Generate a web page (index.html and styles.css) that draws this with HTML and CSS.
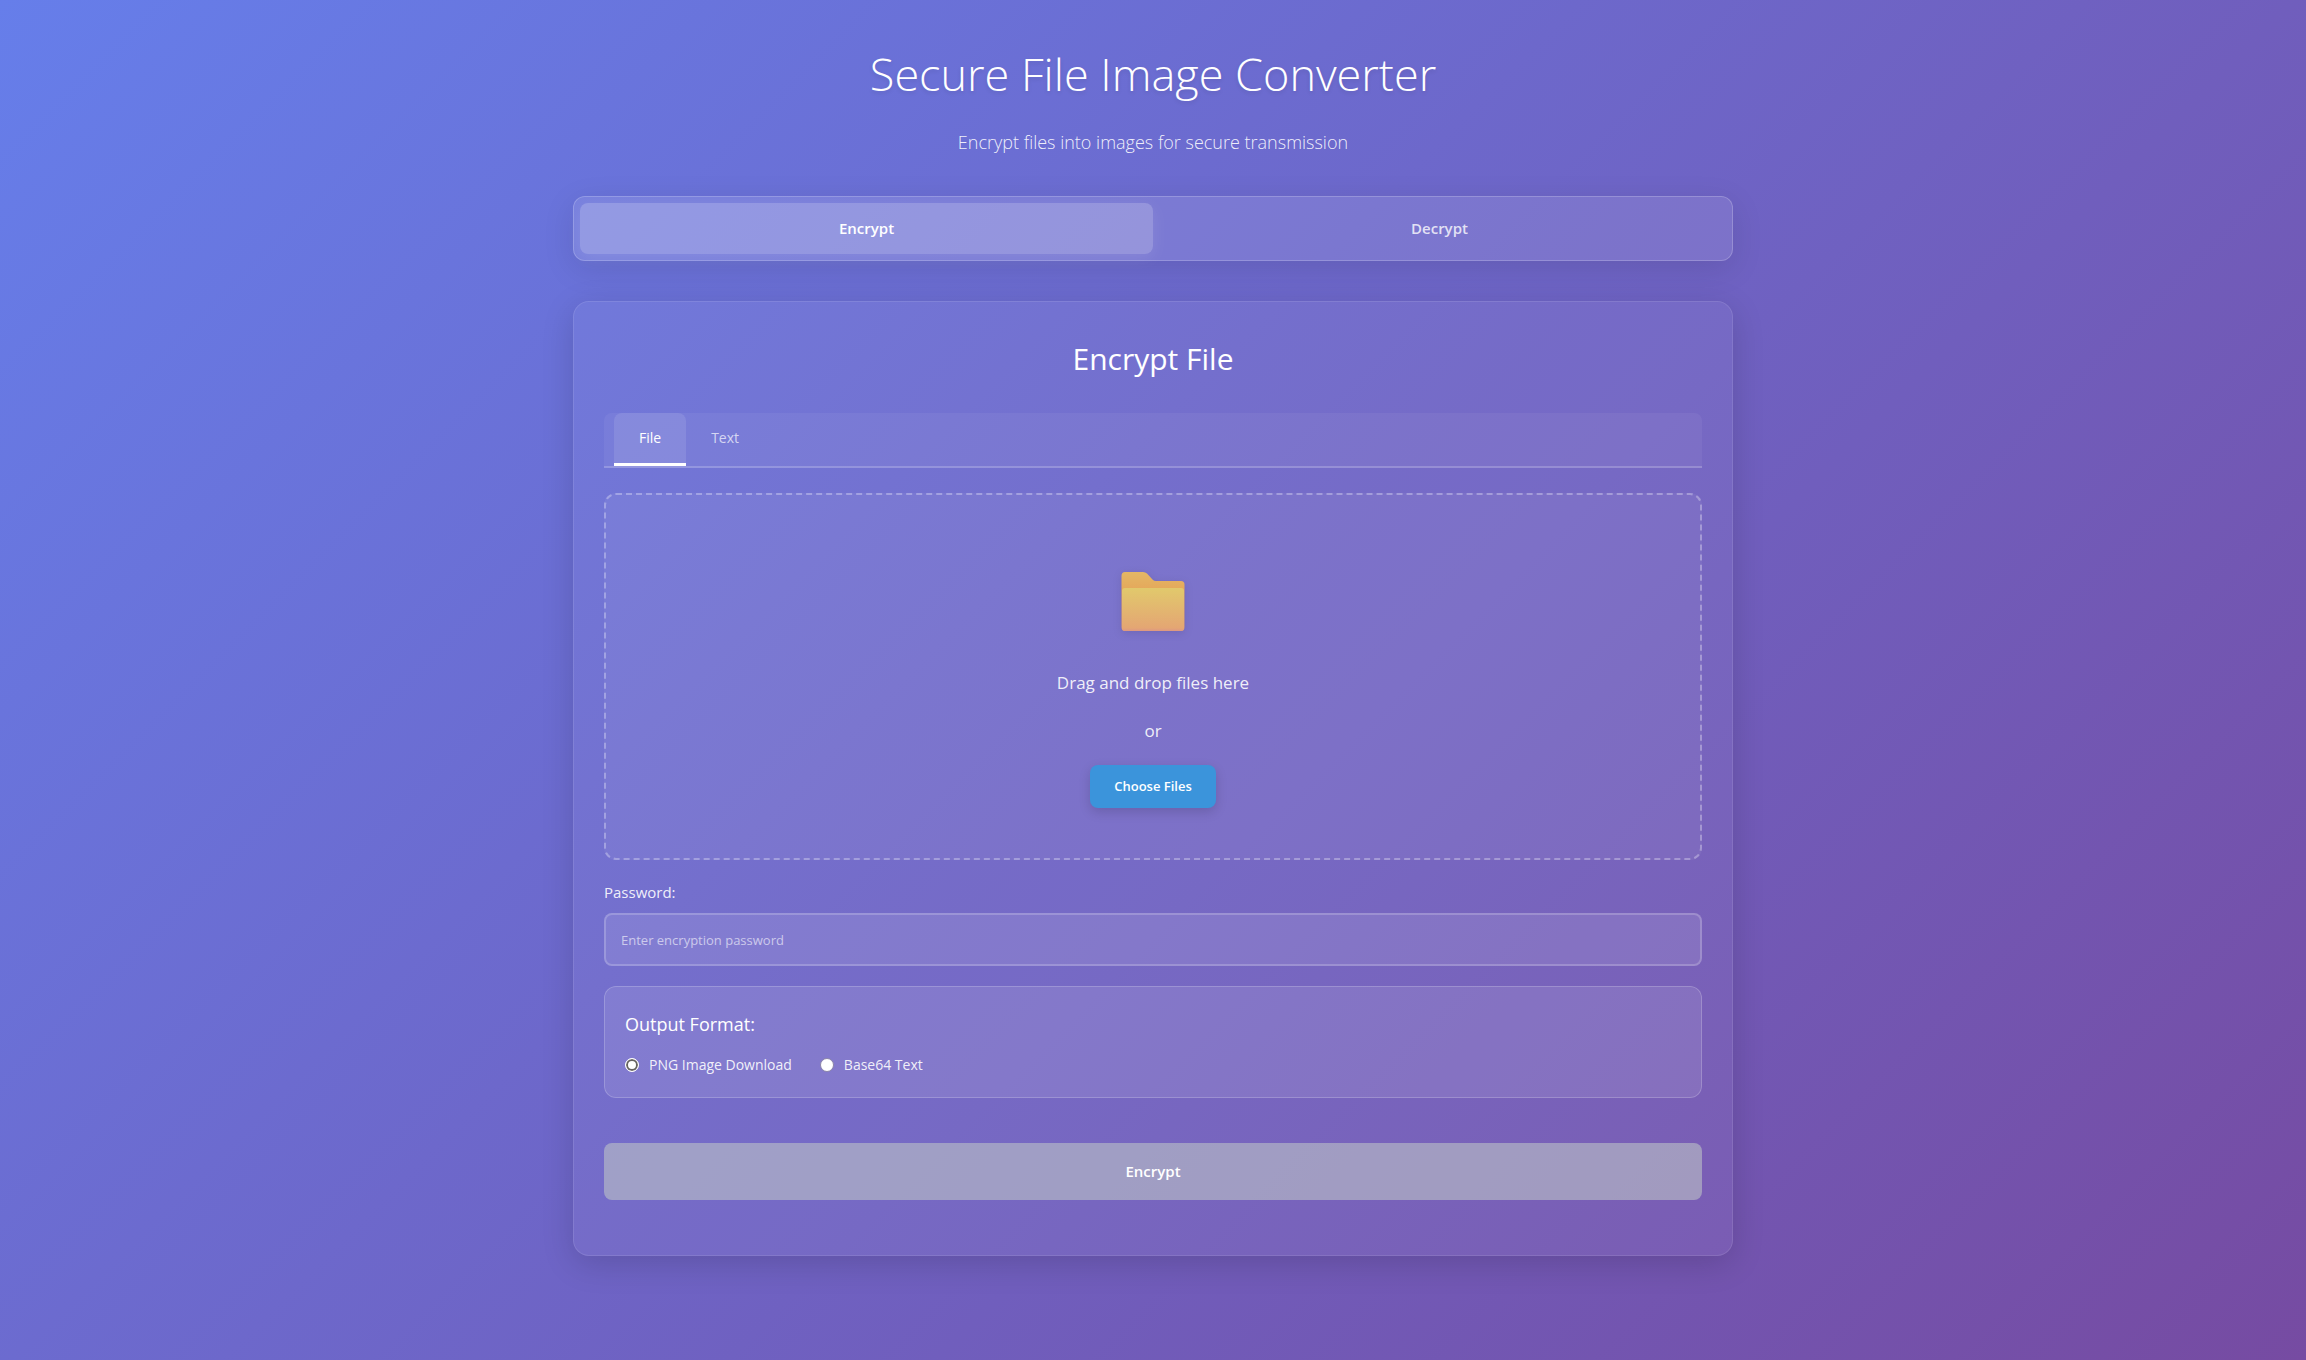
FILE: index.html
```html
<!DOCTYPE html>
<html lang="en">
<head>
<meta charset="utf-8">
<meta name="viewport" content="width=device-width, initial-scale=1">
<title>Secure File Image Converter</title>
<link rel="stylesheet" href="styles.css">
</head>
<body>
<div class="container">
  <header class="header">
    <h1 class="title">Secure File Image Converter</h1>
    <p class="subtitle">Encrypt files into images for secure transmission</p>
  </header>
  <nav class="modes">
    <button type="button" class="mode mode-active">Encrypt</button>
    <button type="button" class="mode">Decrypt</button>
  </nav>
  <main class="card">
    <h2 class="card-title">Encrypt File</h2>
    <div class="tabs">
      <button type="button" class="tab tab-active">File</button>
      <button type="button" class="tab">Text</button>
    </div>
    <form class="form">
      <div class="dropzone">
        <div class="drop-icon">
          <svg class="folder" viewBox="0 0 64 60" width="64" height="60" aria-hidden="true">
            <defs>
              <linearGradient id="back" x1="0" y1="0" x2="0" y2="1">
                <stop offset="0" stop-color="#e3b765"/>
                <stop offset=".3" stop-color="#e5a85b"/>
                <stop offset="1" stop-color="#dc9a70"/>
              </linearGradient>
              <linearGradient id="front" x1="0" y1="0" x2="0" y2="1">
                <stop offset="0" stop-color="#e1c96c"/>
                <stop offset=".93" stop-color="#e4a673"/>
                <stop offset="1" stop-color="#dd9783"/>
              </linearGradient>
            </defs>
            <path fill="url(#back)" d="M4 0H22Q24.500 0 26 1.500L31.500 7.500Q33 9 35 9H60Q63.500 9 63.500 12.500V55Q63.500 59 60 59H4Q.5 59 .5 55V4Q.5 0 4 0Z"/>
            <path fill="url(#front)" d="M4 16H60Q63 16 63 19V56Q63 59 60 59H4Q1 59 1 56V19Q1 16 4 16Z"/>
          </svg>
        </div>
        <p class="drop-text">Drag and drop files here</p>
        <p class="drop-text">or</p>
        <button type="button" class="choose">Choose Files</button>
      </div>
      <label class="label" for="password">Password:</label>
      <input class="input" id="password" type="password" placeholder="Enter encryption password">
      <fieldset class="format">
        <legend class="format-title">Output Format:</legend>
        <div class="options">
          <label class="option"><input class="radio" type="radio" name="format" checked>PNG Image Download</label>
          <label class="option"><input class="radio" type="radio" name="format">Base64 Text</label>
        </div>
      </fieldset>
      <button type="submit" class="submit" disabled>Encrypt</button>
    </form>
  </main>
</div>
</body>
</html>
```
FILE: styles.css
```css
* {
  box-sizing: border-box;
  margin: 0;
  padding: 0;
}

body {
  min-height: 100vh;
  background: linear-gradient(135deg, #667eea 0%, #764ba2 100%);
  color: #fff;
  font-family: "Open Sans", "Noto Sans", sans-serif;
  font-size: 15px;
}

button,
input {
  font: inherit;
  color: inherit;
}

.container {
  max-width: 1200px;
  margin: 0 auto;
  padding: 40px 20px;
}

.header {
  margin-bottom: 40px;
  text-align: center;
}

.title {
  margin-bottom: 20px;
  font-size: 45px;
  font-weight: 300;
  line-height: 68px;
  text-shadow: 0 2px 4px rgba(0, 0, 0, 0.1);
}

.subtitle {
  color: rgba(255, 255, 255, 0.9);
  font-size: 18px;
  font-weight: 300;
  line-height: 28px;
}

.modes {
  display: flex;
  margin-bottom: 40px;
  padding: 6px;
  border: 1px solid rgba(255, 255, 255, 0.2);
  border-radius: 12px;
  background: rgba(255, 255, 255, 0.1);
  box-shadow: 0 8px 32px rgba(0, 0, 0, 0.1);
}

.mode {
  flex: 1;
  padding: 14px 24px;
  border: 0;
  border-radius: 8px;
  background: transparent;
  color: rgba(255, 255, 255, 0.8);
  font-size: 15px;
  font-weight: 600;
  line-height: 23px;
}

.mode-active {
  background: rgba(255, 255, 255, 0.2);
  color: #fff;
  box-shadow: 0 4px 16px rgba(255, 255, 255, 0.1);
}

.card {
  padding: 30px 30px 55px;
  border: 1px solid rgba(255, 255, 255, 0.1);
  border-radius: 16px;
  background: rgba(255, 255, 255, 0.05);
  box-shadow: 0 8px 32px rgba(0, 0, 0, 0.15);
}

.card-title {
  margin-bottom: 28px;
  font-size: 30px;
  font-weight: 400;
  line-height: 53px;
  text-align: center;
}

.tabs {
  display: flex;
  margin-bottom: 25px;
  padding: 0 10px;
  border-bottom: 2px solid rgba(255, 255, 255, 0.2);
  border-radius: 8px 8px 0 0;
  background: rgba(255, 255, 255, 0.05);
}

.tab {
  padding: 14px 25px;
  border: 0;
  border-bottom: 3px solid transparent;
  border-radius: 8px 8px 0 0;
  background: transparent;
  color: rgba(255, 255, 255, 0.7);
  font-size: 14px;
  line-height: 22px;
}

.tab-active {
  border-bottom-color: #fff;
  background: rgba(255, 255, 255, 0.1);
  color: #fff;
}

.form {
  display: flex;
  flex-direction: column;
}

.dropzone {
  display: flex;
  flex-direction: column;
  align-items: center;
  margin-bottom: 20px;
  padding: 60px 20px 50px;
  border: 2px dashed rgba(255, 255, 255, 0.3);
  border-radius: 12px;
  background: rgba(255, 255, 255, 0.05);
}

.drop-icon {
  display: flex;
  align-items: center;
  height: 94px;
  margin-bottom: 20px;
}

.folder {
  filter: drop-shadow(0 2px 4px rgba(0, 0, 0, 0.1));
}

.drop-text {
  margin-bottom: 20px;
  color: rgba(255, 255, 255, 0.9);
  font-size: 17px;
  line-height: 28px;
}

.choose {
  padding: 12px 24px;
  border: 0;
  border-radius: 8px;
  background: #3b94db;
  font-size: 13px;
  font-weight: 600;
  line-height: 19px;
  box-shadow: 0 4px 12px rgba(0, 0, 0, 0.15);
}

.label {
  margin-bottom: 8px;
  color: rgba(255, 255, 255, 0.9);
  font-size: 15px;
  line-height: 25px;
}

.input {
  width: 100%;
  height: 53px;
  margin-bottom: 20px;
  padding: 0 15px;
  border: 2px solid rgba(255, 255, 255, 0.2);
  border-radius: 8px;
  background: rgba(255, 255, 255, 0.1);
  font-size: 13px;
}

.input::placeholder {
  color: rgba(255, 255, 255, 0.6);
}

.format {
  margin-bottom: 45px;
  padding: 20px;
  border: 1px solid rgba(255, 255, 255, 0.2);
  border-radius: 12px;
  background: rgba(255, 255, 255, 0.1);
}

.format-title {
  float: left;
  width: 100%;
  margin-bottom: 12px;
  font-size: 18px;
  line-height: 34px;
}

.options {
  display: flex;
  clear: both;
  gap: 28px;
}

.option {
  display: flex;
  align-items: center;
  gap: 10px;
  color: rgba(255, 255, 255, 0.9);
  font-size: 14px;
  line-height: 24px;
}

.radio {
  width: 14px;
  height: 14px;
  border: 1px solid #8a84a8;
  border-radius: 50%;
  background: #fff;
  appearance: none;
}

.radio:checked {
  border-color: #fff;
  box-shadow: inset 0 0 0 2px #66645f;
}

.submit {
  padding: 16px;
  border: 0;
  border-radius: 8px;
  background: rgba(189, 195, 199, 0.6);
  color: #fff;
  font-size: 15px;
  font-weight: 600;
  line-height: 25px;
}
```
